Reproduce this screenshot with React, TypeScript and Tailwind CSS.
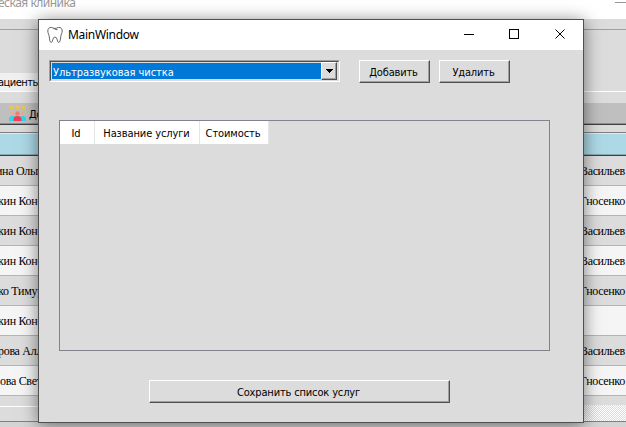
import React from 'react';

const rows = [
  { left: 'ина Ольга', lx: -4, right: 'Васильев' },
  { left: 'кин Конст', lx: -2, right: 'Гносенко' },
  { left: 'кин Конст', lx: -2, right: 'Васильев' },
  { left: 'кин Конст', lx: -2, right: 'Васильев' },
  { left: 'ко Тимур', lx: -2, right: 'Гносенко' },
  { left: 'кин Конст', lx: -2, right: '' },
  { left: 'рова Алла', lx: -2, right: 'Васильев' },
  { left: 'ова Света', lx: 0, right: 'Гносенко' },
];

function Btn({ label, className }: { label: string; className: string }) {
  return (
    <button
      className={`flex h-[23px] items-center justify-center border border-t-white border-l-white border-r-[#505050] border-b-[#505050] bg-[#dcdcdc] pt-[2px] pr-[2px] text-[11px] leading-none tracking-[-0.15px] whitespace-nowrap shadow-[inset_-1px_-1px_0_#a0a0a0] ${className}`}
    >
      {label}
    </button>
  );
}

function Background() {
  return (
    <div className="flex h-full flex-col">
      <div className="flex h-[19px] shrink-0 justify-between bg-white">
        <span className="-ml-[2px] -mt-[6px] font-['Noto_Sans'] text-[12px] leading-[17px] tracking-[-0.5px] whitespace-nowrap text-[#999999]">еская клиника</span>
        <span className="mt-[2px] h-px w-[11px] bg-[#999999]" />
      </div>
      <div className="h-[11px] shrink-0 border-b border-[#a0a0a0]" />
      <div className="flex h-[62px] shrink-0 flex-col justify-end border-b border-white">
        <div className="h-[18px] w-[60px] bg-[#f0f0f0] pt-px text-[11px] leading-[18px] tracking-[-0.5px] whitespace-nowrap">
          <span className="-ml-[2px]">ациенты</span>
        </div>
      </div>
      <div className="mt-[11px] flex h-[22px] shrink-0 items-center border-b border-[#404040] bg-[#bfbfbf] pl-[9px] text-[11px] shadow-[inset_0_-1px_0_#909090]">
        <svg width="17" height="17" viewBox="0 0 17 17" className="mr-[3px] shrink-0">
          <g fill="#fdc62f">
            <path d="M2.5 0l.8 1.5 1.7.2-1.2 1.2.3 1.7-1.6-.8-1.5.8.3-1.7L0 1.7l1.7-.2z" />
            <path d="M8.5 0l.8 1.5 1.7.2-1.2 1.2.3 1.7-1.6-.8-1.5.8.3-1.7L6 1.7l1.7-.2z" />
            <path d="M14.5 0l.8 1.5 1.7.2-1.2 1.2.3 1.7-1.6-.8-1.5.8.3-1.7L12 1.7l1.7-.2z" />
          </g>
          <circle cx="3.500" cy="9" r="2" fill="#f9a58c" />
          <circle cx="13.500" cy="9" r="2" fill="#f9a58c" />
          <path d="M0 16v-2q0-3 3.500-3T7 14v2zM10 16v-2q0-3 3.500-3t3.500 3v2z" fill="#2fd8ee" />
          <circle cx="8.500" cy="8.500" r="2.200" fill="#e8836f" />
          <path d="M4.500 16v-2q0-3 4-3t4 3v2z" fill="#f03e5c" />
        </svg>
        <span className="pt-[3px] tracking-[-0.4px]">Добавить</span>
      </div>
      <div className="mt-[7px] h-[24px] shrink-0 border-t border-b border-t-[#808080] border-b-[#404040] bg-[#add8e6] shadow-[inset_0_1px_0_#d4edf5,inset_0_-1px_0_#86a8b3]" />
      {rows.map((r, i) => (
        <div
          key={i}
          className={`flex h-[30px] shrink-0 justify-between border-b border-[#b4b4b4] pt-px font-['Liberation_Serif',serif] text-[12px] leading-[29px] whitespace-nowrap ${i % 2 ? 'bg-[#f5f5f5]' : 'bg-[#dcdcdc]'}`}
        >
          <span className="tracking-[-0.3px]" style={{ marginLeft: r.lx }}>{r.left}</span>
          <span className="-mt-px h-[29px] w-[46px] pt-px tracking-[-0.35px]">{r.right}</span>
        </div>
      ))}
      <div className="flex h-[26px] shrink-0 items-start justify-between border-b border-[#808080]">
        <div className="mt-[10px] h-px w-[60px] bg-white" />
        <div className="mt-[9px] h-[16px] w-[60px] bg-[repeating-conic-gradient(#ffffff_0_25%,#dcdcdc_0_50%)] bg-[length:2px_2px]" />
      </div>
      <div className="flex-1 bg-[#d4d4d4]" />
    </div>
  );
}

function Dialog() {
  return (
    <div className="absolute top-[19px] left-[38px] flex h-[404px] w-[546px] flex-col border border-[#505050] bg-[#dcdcdc] shadow-[0_2px_16px_rgba(0,0,0,0.5)]">
      <div className="flex h-[30px] shrink-0 items-center bg-white">
        <svg width="16" height="18" viewBox="0 0 16 18" className="ml-[8px]" fill="none" stroke="#555555" strokeWidth="0.9">
          <path d="M4.500 1.500C2 1 .8 3 .8 5c0 2 1.200 3.500 1.500 6 .2 2.500.7 5.500 2 5.500 1.700 0 1-5.500 3.700-5.500s2 5.500 3.700 5.500c1.300 0 1.800-3 2-5.500.3-2.500 1.500-4 1.500-6 0-2-1.200-4-3.700-3.500C10 1.800 9 2.500 8 2.500S6 1.800 4.500 1.500z" />
          <path d="M6.500 2.200q2 1.800 4 1.500" />
        </svg>
        <span className="ml-[5px] flex-1 font-['Noto_Sans',sans-serif] text-[12px] tracking-[-0.3px]">MainWindow</span>
        <svg width="110" height="12" viewBox="0 0 110 12" className="mr-[12px]" fill="none" stroke="#000" shapeRendering="crispEdges">
          <path d="M3 5.500h10M48.500 0.500h9v9h-9z" />
          <path d="M94.500 0.500l9 9M103.500 0.500l-9 9" shapeRendering="auto" />
        </svg>
      </div>
      <div className="mt-[10px] ml-[10px] flex">
        <div className="flex h-[22px] w-[291px] border border-t-[#a0a0a0] border-l-[#a0a0a0] border-r-white border-b-white">
          <div className="flex flex-1 border border-t-[#505050] border-l-[#505050] border-r-[#dcdcdc] border-b-[#dcdcdc] pt-px pl-px">
            <div className="h-[16px] w-[269px] bg-[#0078d7] pt-px pl-px text-[11px] leading-[17px] tracking-[-0.05px] whitespace-nowrap text-white">
              <span>Ультразвуковая чистка</span>
            </div>
            <div className="-mt-px flex h-[18px] w-[16px] shrink-0 items-center justify-center border border-t-white border-l-white border-r-[#505050] border-b-[#505050] shadow-[inset_-1px_-1px_0_#a0a0a0]">
              <svg width="7" height="4" viewBox="0 0 7 4" shapeRendering="crispEdges"><path d="M0 0h7L3.500 4z" /></svg>
            </div>
          </div>
        </div>
        <Btn label="Добавить" className="ml-[19px] w-[71px]" />
        <Btn label="Удалить" className="ml-[9px] w-[71px]" />
      </div>
      <div className="mt-[37px] ml-[20px] h-[231px] w-[491px] border border-[#82828c]">
        <div className="flex h-[23px] w-[209px] bg-white text-center text-[11px] leading-[25px] tracking-[-0.1px] whitespace-nowrap">
          <div className="w-[35px] border-r border-[#e5e5e5] pr-[2px]">Id</div>
          <div className="w-[105px] border-r border-[#e5e5e5] pr-px">Название услуги</div>
          <div className="w-[69px] border-r border-[#e5e5e5] pr-[2px]">Стоимость</div>
        </div>
      </div>
      <Btn label="Сохранить список услуг" className="mt-[29px] ml-[110px] w-[301px]" />
    </div>
  );
}

export default function App() {
  return (
    <div className="relative h-[427px] w-[626px] overflow-hidden bg-[#dcdcdc] font-['DejaVu_Sans_Condensed','DejaVu_Sans',sans-serif] text-black">
      <Background />
      <Dialog />
    </div>
  );
}
